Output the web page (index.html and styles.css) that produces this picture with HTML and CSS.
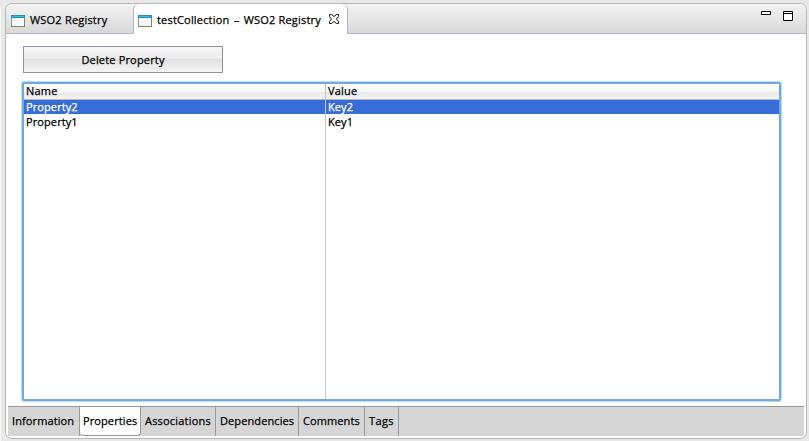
FILE: index.html
```html
<!DOCTYPE html>
<html lang="en">
<head>
<meta charset="utf-8">
<title>testCollection – WSO2 Registry</title>
<link rel="stylesheet" href="styles.css">
</head>
<body>
<div class="edge"></div>
<main class="window">
  <header class="tabs">
    <div class="tab">
      <svg class="icon" width="14" height="12" viewBox="0 0 14 12"><path fill="#8c814f" d="M0 0h14v12H0z"/><path fill="#f4faff" d="M1 3h12v8H1z"/><path fill="#218dc5" d="M0 0h14v3H0z"/><path fill="#45b5e6" d="M1 1h12v1H1z"/><path fill="#6c9bb5" d="M0 3h1v8H0z"/></svg>
      <span class="t-one">WSO2 Registry</span>
    </div>
    <div class="tab active">
      <svg class="icon" width="14" height="12" viewBox="0 0 14 12"><path fill="#8c814f" d="M0 0h14v12H0z"/><path fill="#f4faff" d="M1 3h12v8H1z"/><path fill="#218dc5" d="M0 0h14v3H0z"/><path fill="#45b5e6" d="M1 1h12v1H1z"/><path fill="#6c9bb5" d="M0 3h1v8H0z"/></svg>
      <span class="t-two">testCollection <i>–</i> WSO2 Registry</span>
      <svg class="close" width="10" height="10" viewBox="0 0 10 10"><path fill="#fff" stroke="#111" d="M.5.5h2L5 2.500 7.500.5h2v2L7.500 5l2 2.500v2h-2L5 7.500 2.500 9.500h-2v-2l2-2.500-2-2.500z"/></svg>
    </div>
    <div class="rest">
      <svg width="10" height="4" viewBox="0 0 10 4"><path fill="#fff" stroke="#000" d="M.5.5h9v3h-9z"/></svg>
      <svg width="10" height="10" viewBox="0 0 10 10"><path fill="#fff" stroke="#000" d="M.5.5h9v9h-9zM1 2.500h8"/></svg>
    </div>
  </header>
  <section class="panel">
    <button class="delete"><span>Delete Property</span></button>
    <div class="table">
      <div class="row head"><div><span>Name</span></div><div><span>Value</span></div></div>
      <div class="row selected"><div><span>Property2</span></div><div><span>Key2</span></div></div>
      <div class="row"><div><span>Property1</span></div><div><span>Key1</span></div></div>
      <div class="row filler"><div></div><div></div></div>
    </div>
  </section>
  <nav class="pages">
    <div class="page p1"><span>Information</span></div>
    <div class="page p2 current"><span>Properties</span></div>
    <div class="page p3"><span>Associations</span></div>
    <div class="page p4"><span>Dependencies</span></div>
    <div class="page p5"><span>Comments</span></div>
    <div class="page p6"><span>Tags</span></div>
  </nav>
</main>
</body>
</html>
```
FILE: styles.css
```css
* { box-sizing: border-box; }
body {
  margin: 0;
  width: 809px;
  height: 441px;
  overflow: hidden;
  display: flex;
  background: #e8e8e8;
  color: #000;
  font: 11px/14px "Open Sans", "Noto Sans", sans-serif;
  letter-spacing: 0.1px;
  -webkit-text-stroke: 0.25px currentColor;
  white-space: nowrap;
}
svg { display: block; flex: none; }
.edge { width: 1px; margin: 8px 4px 0 0; background: #f8f8f8; }
.window {
  width: 802px;
  height: 436px;
  margin-top: 3px;
  border: 1px solid #b8b8b8;
  border-radius: 7px;
  background: #fff;
  display: flex;
  flex-direction: column;
  overflow: hidden;
}
.tabs {
  flex: 0 0 30px;
  display: flex;
  background: linear-gradient(#f3f3f3, #d8d8d8);
}
.tab {
  width: 127px;
  display: flex;
  padding: 10px 0 0 5px;
  border-bottom: 1px solid #b6b3cb;
}
.icon { margin: 1px 5px 0 0; }
.active {
  width: 215px;
  padding-left: 4px;
  background: #fff;
  border: solid #b6b3cb;
  border-width: 0 1px;
  border-radius: 6px 6px 0 0;
}
.tab span { margin-top: -1px; }
.t-one { letter-spacing: 0.2px; }
.t-two { letter-spacing: 0.18px; }
.t-two i { font-style: normal; margin: 0 1.3px; }
.close { margin: 0 8px 0 auto; }
.rest {
  flex: 1;
  display: flex;
  justify-content: flex-end;
  gap: 12px;
  padding: 7px 13px 0 0;
  border-bottom: 1px solid #b6b3cb;
}
.panel { flex: 1; padding: 12px 0 0 15px; }
.delete {
  display: flex;
  align-items: center;
  justify-content: center;
  width: 200px;
  height: 27px;
  margin: 0 0 9px 2px;
  padding: 0;
  border: 1px solid #919191;
  background: linear-gradient(#f8f8f8, #ededed 45%, #e1e1e1 50%, #f5f5f5);
  color: #000;
  font: inherit;
  letter-spacing: 0.17px;
}
.table {
  display: flex;
  flex-direction: column;
  width: 759px;
  height: 319px;
  margin-left: 1px;
  border: 2px solid #72aae0;
  box-shadow: 0 0 0 1px #bcdcf5;
  border-radius: 2px;
}
.row { display: flex; height: 15px; line-height: 15px; }
.row div { padding-left: 2px; }
.row div:first-child { width: 302px; border-right: 1px solid #c5c5c5; }
.row div:last-child { flex: 1; }
.head {
  height: 16px;
  line-height: 14px;
  letter-spacing: 0.2px;
  border-bottom: 1px solid #b8b8b8;
  background: linear-gradient(#fff, #f8f8f8 50%, #ebebeb 52%, #f2f2f2);
}
.selected { height: 14px; background: #376dd9; color: #fff; line-height: 14px; }
.filler { flex: 1; }
.pages {
  flex: 0 0 30px;
  margin: 0 2px 2px;
  display: flex;
  background: #d6d6d6;
  border-top: 1px solid #999;
}
.page { border-right: 1px solid #999; padding: 7px 0 0 4px; }
.current { background: #fff; height: 29px; border-bottom: 1px solid #999; border-radius: 0 0 4px 4px; padding-left: 3px; }
.p1 { width: 72px; }
.p2 { width: 61px; }
.p3 { width: 75px; letter-spacing: 0.2px; }
.p4 { width: 83px; }
.p5 { width: 66px; }
.p6 { width: 34px; letter-spacing: 0.4px; }
```
